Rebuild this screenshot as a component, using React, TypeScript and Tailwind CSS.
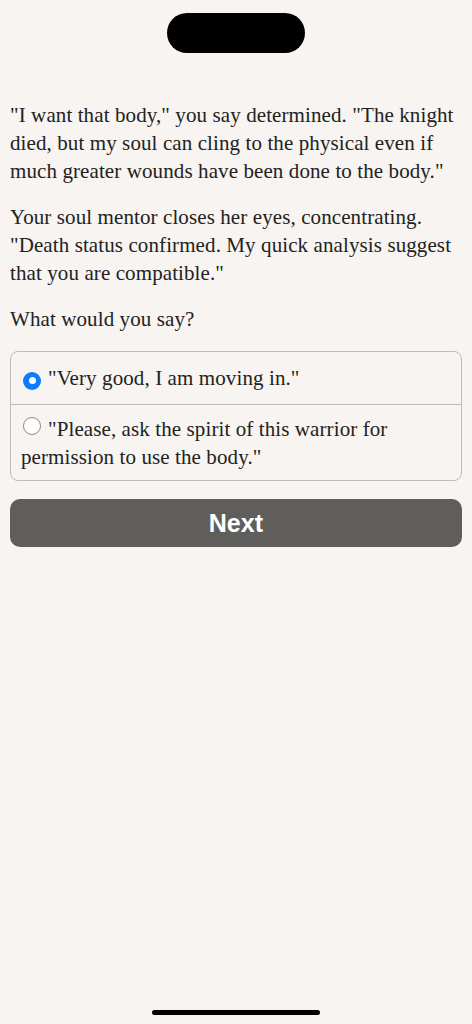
import React, { useState } from 'react';

const OPTIONS = [
  '"Very good, I am moving in."',
  '"Please, ask the spirit of this warrior for permission to use the body."',
];

export default function App() {
  const [selected, setSelected] = useState(0);

  return (
    <div className="min-h-[1024px] bg-[#f7f4f1] flex flex-col text-[#222222]" style={{ fontFamily: '"Liberation Serif", serif' }}>
      {/* Dynamic island */}
      <div className="flex justify-center pt-[13px]">
        <div className="w-[138px] h-[40px] rounded-full bg-black" />
      </div>

      <div className="px-[10px] pt-[48px] text-[21px] leading-[28px] tracking-[0.1px]">
        <p>"I want that body," you say determined. "The knight died, but my soul can cling to the physical even if much greater wounds have been done to the body."</p>
        <p className="mt-[18px]">Your soul mentor closes her eyes, concentrating. "Death status confirmed. My quick analysis suggest that you are compatible."</p>
        <p className="mt-[18px]">What would you say?</p>

        <div className="mt-[18px] border border-[#bdbdbd] rounded-[8px] overflow-hidden">
          {OPTIONS.map((opt, i) => (
            <label
              key={i}
              onClick={() => setSelected(i)}
              className={
                'block px-[10px] cursor-pointer ' +
                (i > 0 ? 'border-t border-[#bdbdbd] pt-[10px] pb-[9px]' : 'py-[12px]')
              }
            >
              <span className="inline-flex align-[1px] mr-[7px] ml-[2px]">
                {selected === i ? (
                  <span className="w-[18px] h-[18px] rounded-full bg-[#0a7cff] flex items-center justify-center">
                    <span className="w-[7px] h-[7px] rounded-full bg-white" />
                  </span>
                ) : (
                  <span className="w-[18px] h-[18px] rounded-full border-[1.5px] border-[#8a8a8a] bg-white" />
                )}
              </span>
              {opt}
            </label>
          ))}
        </div>

        <button
          className="mt-[18px] w-full h-[48px] rounded-[10px] bg-[#5f5e5c] text-white text-[25px] font-bold"
          style={{ fontFamily: '"Liberation Sans", Arial, sans-serif' }}
        >
          Next
        </button>
      </div>

      <div className="flex-1" />
      {/* Home indicator */}
      <div className="flex justify-center pb-[9px]">
        <div className="w-[168px] h-[5px] rounded-full bg-black" />
      </div>
    </div>
  );
}
